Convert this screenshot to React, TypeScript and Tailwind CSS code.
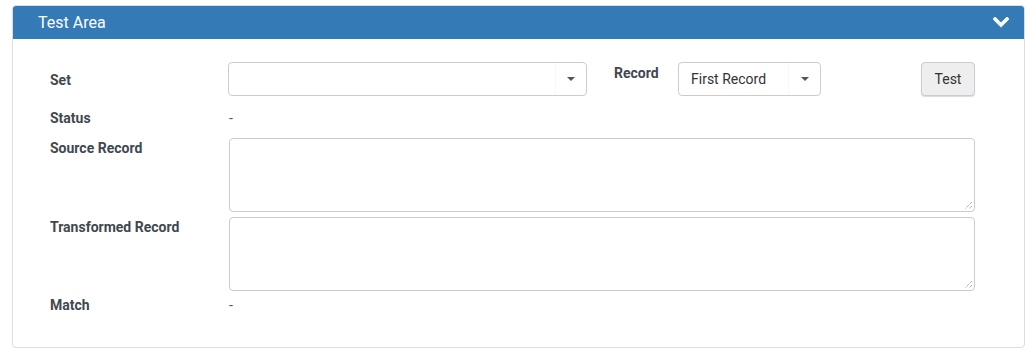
import React from "react";

const Caret = () => (
  <svg width="8" height="4" viewBox="0 0 8 4" className="block">
    <path d="M0 0 L8 0 L4 4 Z" fill="#555" />
  </svg>
);

const Grip = () => (
  <svg className="absolute right-[1px] bottom-[1px]" width="9" height="9" viewBox="0 0 9 9">
    <path d="M8 1 L1 8 M8 5 L5 8" stroke="#888" strokeWidth="1" strokeDasharray="1 1" />
  </svg>
);

export default function App() {
  return (
    <div className="w-[1030px] h-[356px] bg-white pt-[5px] pl-[12px]" style={{ fontFamily: "Roboto, 'Liberation Sans', sans-serif" }}>
      <div className="w-[1013px] h-[343px] border border-[#dddddd] rounded-[4px] overflow-hidden flex flex-col">
        <div className="h-[33px] bg-[#337ab7] flex items-center justify-between pl-[25px] pr-[15px] shrink-0">
          <span className="text-white text-[16px]">Test Area</span>
          <svg width="16" height="11" viewBox="0 0 16 11" className="block">
            <path d="M2 2 L8 8 L14 2" stroke="#fff" strokeWidth="3.6" fill="none" strokeLinecap="square" />
          </svg>
        </div>
        <div className="pl-[37px] pt-[23px] text-[14px] text-[#3f4850]">
          <div className="flex items-start h-[34px]">
            <div className="w-[178px] h-[34px] pt-[3px] flex items-center font-bold">Set</div>
            <div className="w-[359px] h-[34px] border border-[#ccc] rounded-[4px] flex items-center justify-end">
              <div className="w-[31px] h-full border-l border-[#f8f8f8] flex items-center justify-center">
                <Caret />
              </div>
            </div>
            <div className="ml-[27px] w-[64px] pt-[1px] font-bold leading-[20px]">Record</div>
            <div className="w-[143px] h-[34px] border border-[#ccc] rounded-[4px] flex items-center justify-between">
              <span className="pl-[12px] text-[14px] text-[#333]">First Record</span>
              <div className="w-[32px] h-full border-l border-[#f8f8f8] flex items-center justify-center">
                <Caret />
              </div>
            </div>
            <div className="ml-[100px] w-[54px] h-[34px] bg-[#eeeeee] border border-[#cccccc] rounded-[4px] shadow-[0_1px_1px_rgba(0,0,0,0.15)] flex items-center justify-center text-[14px] text-[#333]">
              Test
            </div>
          </div>
          <div className="flex mt-[12px] h-[20px] items-center">
            <div className="w-[179px] font-bold">Status</div>
            <div className="text-[#555]">-</div>
          </div>
          <div className="flex mt-[10px]">
            <div className="w-[179px] font-bold leading-[20px]">Source Record</div>
            <div className="relative w-[746px] h-[74px] border border-[#ccc] rounded-[4px]">
              <Grip />
            </div>
          </div>
          <div className="flex mt-[5px]">
            <div className="w-[179px] font-bold leading-[20px]">Transformed Record</div>
            <div className="relative w-[746px] h-[74px] border border-[#ccc] rounded-[4px]">
              <Grip />
            </div>
          </div>
          <div className="flex mt-[4px] h-[20px] items-center">
            <div className="w-[179px] font-bold">Match</div>
            <div className="text-[#555]">-</div>
          </div>
        </div>
      </div>
    </div>
  );
}
